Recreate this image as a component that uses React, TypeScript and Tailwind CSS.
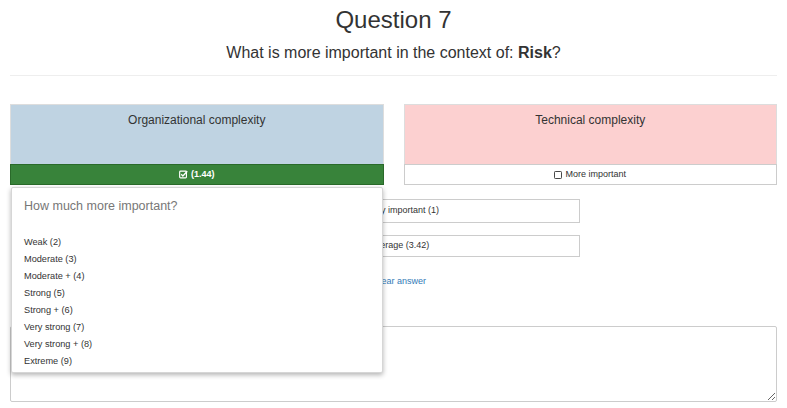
import React from "react";

const levels = [
  "Weak (2)",
  "Moderate (3)",
  "Moderate + (4)",
  "Strong (5)",
  "Strong + (6)",
  "Very strong (7)",
  "Very strong + (8)",
  "Extreme (9)",
];

function CheckedBox() {
  return (
    <svg width="9" height="9" viewBox="0 0 10 10" className="inline-block">
      <rect x="0.75" y="1.25" width="7.5" height="7.5" rx="1" fill="none" stroke="white" strokeWidth="1.3" />
      <path d="M2.5 4.8 L4.3 6.6 L9.2 1.4" fill="none" stroke="white" strokeWidth="1.5" />
    </svg>
  );
}

function EmptyBox() {
  return (
    <svg width="8" height="8" viewBox="0 0 8 8" className="inline-block">
      <rect x="0.5" y="0.5" width="7" height="7" rx="0.8" fill="none" stroke="#333" strokeWidth="0.9" />
    </svg>
  );
}

export default function App() {
  return (
    <div className="min-h-[408px] bg-white px-[10px] text-[#333]" style={{ fontFamily: '"Liberation Sans", Arial, sans-serif' }}>
      <h1 className="pt-[6px] text-center text-[24px] leading-[28px] font-normal">Question 7</h1>
      <p className="mt-[8px] text-center text-[16px] leading-[22px]">
        What is more important in the context of: <b>Risk</b>?
      </p>
      <hr className="mt-[11px] border-t border-[#eee]" />

      <div className="mt-[28px] grid grid-cols-2 gap-[20px]">
        <div className="relative">
          <div className="h-[60px] border border-b-0 border-[#ddd] bg-[#bfd3e2] pt-[7px] text-center text-[12px] leading-[16px]">
            Organizational complexity
          </div>
          <div className="flex h-[21px] items-center justify-center gap-[3px] border border-[#2a6a2a] bg-[#38833a] text-[9px] font-bold text-white">
            <CheckedBox />
            <span>(1.44)</span>
          </div>

          {/* dropdown popover */}
          <div className="absolute left-[1px] right-[1px] top-full z-10 mt-[2px] h-[186px] rounded-[2px] border border-[#d6d6d6] bg-white shadow-[0_2px_5px_rgba(0,0,0,0.3)]">
            <div className="px-[12px] pt-[10px] text-[12.5px] leading-[16px] text-[#777]">How much more important?</div>
            <ul className="mt-[20px] px-[12px]">
              {levels.map((l) => (
                <li key={l} className="text-[9.2px] leading-[17px] text-[#333]">
                  {l}
                </li>
              ))}
            </ul>
          </div>
        </div>

        <div>
          <div className="h-[60px] border border-b-0 border-[#ddd] bg-[#fcd0d0] pt-[7px] text-center text-[12px] leading-[16px]">
            Technical complexity
          </div>
          <div className="flex h-[21px] items-center justify-center gap-[3px] border border-[#ccc] bg-white text-[9px]">
            <EmptyBox />
            <span>More important</span>
          </div>
        </div>
      </div>

      <div className="mt-[14px] flex">
        <div className="w-[353px]" />
        <div className="flex w-[217px] flex-col">
          <div className="-ml-[15px] flex h-[24px] items-center border border-[#ccc] pl-[7px] text-[9px]">
            Equally important (1)
          </div>
          <div className="mt-[12px] flex h-[22px] items-center border border-[#ccc] pl-[6px] text-[9px]">
            Average (3.42)
          </div>
          <a href="#" className="mt-[18px] pl-[10px] text-[9px] leading-[12px] text-[#337ab7]">
            Clear answer
          </a>
        </div>
      </div>

      <textarea className="mt-[39px] block h-[76px] w-full rounded-[2px] border border-[#ccc]" />
    </div>
  );
}
